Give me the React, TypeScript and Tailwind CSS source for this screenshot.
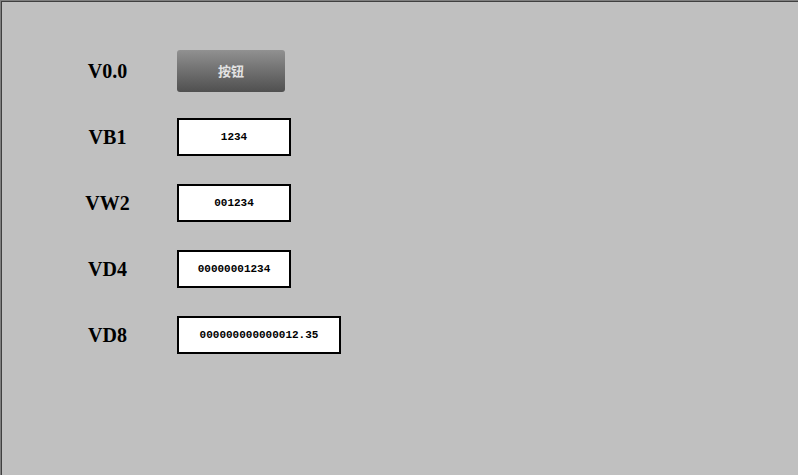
const ROWS = [
  { label: "VB1", value: "1234", wide: false },
  { label: "VW2", value: "001234", wide: false },
  { label: "VD4", value: "00000001234", wide: false },
  { label: "VD8", value: "000000000000012.35", wide: true },
];

function Label({ text }: { text: string }) {
  return (
    <div className="w-[75px] ml-[68px] mr-[32px] text-center text-[20px] font-bold text-black font-['Liberation_Serif',serif]">
      {text}
    </div>
  );
}

export default function App() {
  return (
    <div className="w-[798px] h-[475px] bg-[#808080] pt-px pl-px">
      <div className="w-full h-full bg-[#c0c0c0] border-t border-l border-[#404040] pt-[36px]">
        <div className="flex items-center h-[66px]">
          <Label text="V0.0" />
          <button className="w-[108px] h-[42px] rounded-[3px] bg-gradient-to-b from-[#919191] to-[#505050] text-[13px] font-bold text-[#e2e2e2] font-['Noto_Sans_CJK_SC',sans-serif]">
            按钮
          </button>
        </div>
        {ROWS.map((r) => (
          <div key={r.label} className="flex items-center h-[66px]">
            <Label text={r.label} />
            <div
              className={
                (r.wide ? "w-[164px]" : "w-[114px]") +
                " h-[38px] bg-white border-2 border-black flex items-center justify-center text-[11px] font-bold text-black font-['Liberation_Mono',monospace]"
              }
            >
              {r.value}
            </div>
          </div>
        ))}
      </div>
    </div>
  );
}
